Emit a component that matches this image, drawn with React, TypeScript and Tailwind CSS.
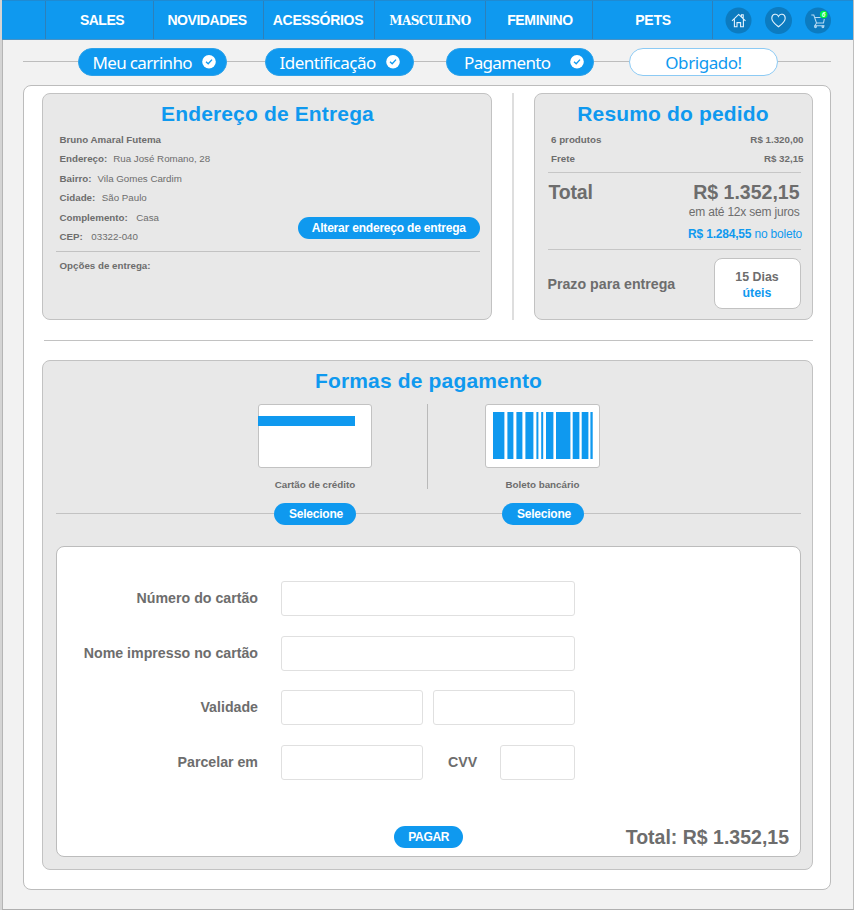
import React from "react";

const BARS: [number, number][] = [
  [0, 11.4], [14.4, 6], [23.4, 6], [32.4, 8], [43.4, 2], [48.2, 2],
  [53, 7.4], [63, 14.4], [79.7, 6.7], [88.7, 6.7], [97.4, 2.3],
];

function NavItem({ className, children }: { className: string; children: React.ReactNode }) {
  return (
    <a className={`flex h-full shrink-0 items-center justify-center border-l border-[#2d80ba] text-[14px] font-bold whitespace-nowrap ${className}`}>
      {children}
    </a>
  );
}

function Step({ label, done, className }: { label: string; done?: boolean; className: string }) {
  return (
    <div className={`flex h-[28px] shrink-0 items-center rounded-full border font-['Noto_Sans','Open_Sans',sans-serif] text-[17px] whitespace-nowrap ${className}`}>
      <span className="pt-[2px]">{label}</span>
      {done && (
        <svg className="ml-auto" width="14" height="14" viewBox="0 0 14 14">
          <circle cx="7" cy="6.8" r="6.8" fill="#fff" />
          <path d="M4 6.8 6.2 8.8 10 4.6" fill="none" stroke="#0f99ef" strokeWidth="1.3" />
        </svg>
      )}
    </div>
  );
}

function Pill({ className, children }: { className: string; children: React.ReactNode }) {
  return (
    <button className={`flex h-[22px] shrink-0 items-center justify-center rounded-full bg-[#0f99ef] text-[12px] font-bold whitespace-nowrap text-white ${className}`}>
      {children}
    </button>
  );
}

function Line({ label, value, gap }: { label: string; value?: string; gap?: string }) {
  return (
    <div className="flex h-[19.4px] items-center whitespace-nowrap">
      <b>{label}</b>
      {value && <span className={gap}>{value}</span>}
    </div>
  );
}

function Label({ children }: { children: React.ReactNode }) {
  return <label className="w-[201px] shrink-0 pt-px text-right text-[14.2px] font-bold whitespace-nowrap">{children}</label>;
}

function Field({ className }: { className: string }) {
  return <div className={`h-[35px] shrink-0 rounded-[3px] border border-[#e0e0e0] bg-white ${className}`} />;
}

function Header() {
  return (
    <header className="flex h-[40px] border-y border-t-[#1f8ad2] border-b-[#4a92c4] bg-[#0f99ef] pl-[43px] text-white">
      <NavItem className="w-[108px] pl-[5px] tracking-[-0.5px]">SALES</NavItem>
      <NavItem className="w-[110px] pr-[3px] tracking-[-0.45px]">NOVIDADES</NavItem>
      <NavItem className="w-[111px] pr-[2px] tracking-[-0.3px]">ACESSÓRIOS</NavItem>
      <NavItem className="w-[111px] pt-px font-['DejaVu_Serif',serif] text-[12px]! tracking-[-0.6px]">MASCULINO</NavItem>
      <NavItem className="w-[107px] pl-[2px] tracking-[-0.35px]">FEMININO</NavItem>
      <NavItem className="w-[120px] pl-px tracking-[-0.3px]">PETS</NavItem>
      <div className="flex h-full flex-1 items-center gap-[13px] border-l border-[#2d80ba] pl-[12px]">
        <svg width="27" height="27" viewBox="0 0 27 27" fill="none" stroke="#e4f3fd" strokeWidth="1.1">
          <circle cx="13.5" cy="13.5" r="13" fill="#0c7bc0" stroke="none" />
          <path d="M7 13.8 13.7 7.4 20.5 13.8M9.4 12.2V19.7H12V15.6H15.6V19.7H18.4V12.2M16.4 9.5V7.8H18.2V11.3" />
        </svg>
        <svg width="27" height="27" viewBox="0 0 27 27" fill="none" stroke="#e4f3fd" strokeWidth="1.1">
          <circle cx="13.5" cy="13.5" r="13.5" fill="#0c7bc0" stroke="none" />
          <path d="M13.5 19.8C10.6 17.5 6.8 14.8 6.8 11.2C6.8 6.9 12 5.8 13.5 9.4C15 5.8 20.2 6.9 20.2 11.2C20.2 14.8 16.4 17.5 13.5 19.8Z" />
        </svg>
        <svg width="27" height="27" viewBox="0 0 27 27" fill="none" stroke="#b9dcf3" strokeWidth="1.05">
          <circle cx="13" cy="13.5" r="13" fill="#0c7bc0" stroke="none" />
          <path d="M6.3 8H8.8L11.5 16H18.5L19.3 12M9.7 10.4H15.5M11.4 16.2 9.8 18.7H19.5" />
          <circle cx="10.5" cy="19.8" r="0.9" />
          <circle cx="17.9" cy="19.8" r="0.9" />
          <circle cx="18.7" cy="7.5" r="3.8" fill="#00f53c" stroke="none" />
          <text x="18.5" y="9.8" textAnchor="middle" fontSize="6.5" fontWeight="bold" fontStyle="italic" fill="#fff" stroke="none">6</text>
        </svg>
      </div>
    </header>
  );
}

function Steps() {
  return (
    <div className="flex h-[45px] items-start pt-[8px] pl-[21px]">
      <div className="flex items-center">
        <i className="mb-px h-px w-[55px] bg-[#bdbdbd]" />
        <Step label="Meu carrinho" done className="w-[149px] border-[#2ca2ea] bg-[#0f99ef] pr-[10px] pl-[13.5px] tracking-[-0.66px] text-white" />
        <i className="mb-px h-px w-[38px] bg-[#bdbdbd]" />
        <Step label="Identificação" done className="w-[149px] border-[#2ca2ea] bg-[#0f99ef] pr-[13px] pl-[13.5px] tracking-[-0.5px] text-white" />
        <i className="mb-px h-px w-[32px] bg-[#bdbdbd]" />
        <Step label="Pagamento" done className="w-[148px] border-[#2ca2ea] bg-[#0f99ef] pr-[9px] pl-[17px] tracking-[-0.65px] text-white" />
        <i className="mb-px h-px w-[35px] bg-[#bdbdbd]" />
        <Step label="Obrigado!" className="w-[149px] justify-center border-[#8ccaf4] bg-white tracking-[-0.45px] text-[#0f99ef]" />
        <i className="mb-px h-px w-[53px] bg-[#bdbdbd]" />
      </div>
    </div>
  );
}

function Address() {
  return (
    <section className="h-[227px] w-[450px] shrink-0 rounded-[8px] border border-[#c2c2c2] bg-[#e8e8e8] pt-[7px] pr-[11px] pl-[13px] text-[9.75px]">
      <h2 className="pr-px text-center text-[21px] leading-[26px] font-bold tracking-[0.15px] text-[#0f99ef]">Endereço de Entrega</h2>
      <div className="mt-[4px] flex h-[121px] items-start justify-between border-b border-[#c2c2c2] pl-[3.5px]">
        <div className="-mt-[0.4px]">
          <Line label="Bruno Amaral Futema" />
          <Line label="Endereço:" value="Rua José Romano, 28" gap="ml-[6px]" />
          <Line label="Bairro:" value="Vila Gomes Cardim" gap="ml-[6px]" />
          <Line label="Cidade:" value="São Paulo" gap="ml-[6.5px]" />
          <Line label="Complemento:" value="Casa" gap="ml-[8.5px]" />
          <Line label="CEP:" value="03322-040" gap="ml-[8.5px]" />
        </div>
        <Pill className="mt-[86px] w-[182.5px] tracking-[-0.2px]">Alterar endereço de entrega</Pill>
      </div>
      <div className="mt-[5px] pl-[3.5px]">
        <Line label="Opções de entrega:" />
      </div>
    </section>
  );
}

function Summary() {
  return (
    <section className="h-[227px] w-[279px] shrink-0 rounded-[8px] border border-[#c2c2c2] bg-[#e8e8e8] pt-[7px] pl-[13px]">
      <h2 className="w-[250px] text-center text-[21px] leading-[26px] font-bold tracking-[0.15px] text-[#0f99ef]">Resumo do pedido</h2>
      <div className="mt-[4px] w-[255.5px] pl-[3px] text-[9.75px] font-bold">
        <div className="flex h-[19px] items-center justify-between"><span>6 produtos</span><span>R$ 1.320,00</span></div>
        <div className="flex h-[19px] items-center justify-between"><span>Frete</span><span>R$ 32,15</span></div>
      </div>
      <div className="mt-[3px] flex h-[78px] w-[253px] justify-between border-y border-[#c6c6c6] pl-[0.5px]">
        <b className="pt-[7px] text-[19.5px] leading-[24px] tracking-[-0.2px]">Total</b>
        <div className="pt-[7px] text-right text-[12px] tracking-[-0.2px] whitespace-nowrap">
          <b className="block pr-[1.5px] text-[19.5px] leading-[24px] tracking-normal">R$ 1.352,15</b>
          <p className="pt-px pr-[1.5px] leading-[15px]">em até 12x sem juros</p>
          <p className="-mr-px pt-[6px] leading-[16px] text-[#0f99ef]"><b>R$ 1.284,55</b> no boleto</p>
        </div>
      </div>
      <div className="flex h-[68px] w-[252.5px] items-center justify-between font-bold">
        <span className="-ml-[0.5px] pt-px text-[14.2px]">Prazo para entrega</span>
        <div className="mb-px flex h-[51px] w-[87px] flex-col items-center rounded-[8px] border border-[#c2c2c2] bg-white pt-[10px] text-[12.4px] leading-[16px]">
          <span>15 Dias</span>
          <span className="text-[#0f99ef]">úteis</span>
        </div>
      </div>
    </section>
  );
}

function Payment() {
  return (
    <section className="h-[510px] rounded-[8px] border border-[#c2c2c2] bg-[#e8e8e8] pt-[7px] pr-[11px] pl-[13px]">
      <h2 className="text-center text-[21px] leading-[26px] font-bold tracking-[0.16px] text-[#0f99ef]">Formas de pagamento</h2>
      <div className="mt-[10px] flex h-[87px] pl-[202px] text-center text-[9.8px] font-bold">
        <div className="w-[114px]">
          <div className="h-[64px] rounded-[3px] border border-[#c2c2c2] bg-white pt-[11px]">
            <div className="-ml-px h-[10px] w-[97px] bg-[#0f99ef]" />
          </div>
          <p className="pt-[10px] leading-[14px]">Cartão de crédito</p>
        </div>
        <i className="ml-[55px] h-[85px] w-px bg-[#b9b9b9]" />
        <div className="ml-[57px] w-[115px]">
          <div className="flex h-[64px] justify-center rounded-[3px] border border-[#c2c2c2] bg-white pt-[7px]">
            <svg width="100" height="47" viewBox="0 0 100 47" fill="#0f99ef">
              {BARS.map(([x, w]) => <rect key={x} x={x} y="0" width={w} height="47" />)}
            </svg>
          </div>
          <p className="pt-[10px] leading-[14px]">Boleto bancário</p>
        </div>
      </div>
      <div className="mt-[11px] flex h-[23px] items-center">
        <i className="h-px w-[218px] bg-[#c2c2c2]" />
        <Pill className="w-[82px] pl-[2px] tracking-[-0.22px]">Selecione</Pill>
        <i className="h-px w-[146px] bg-[#c2c2c2]" />
        <Pill className="w-[82px] pl-[2px] tracking-[-0.22px]">Selecione</Pill>
        <i className="h-px flex-1 bg-[#c2c2c2]" />
      </div>
      <form className="mt-[21px] h-[311px] rounded-[8px] border border-[#bcbcbc] bg-white pt-[34px]">
        <div className="flex flex-col gap-[19.5px]">
          <div className="flex items-center gap-[23px]">
            <Label>Número do cartão</Label>
            <Field className="w-[294px]" />
          </div>
          <div className="flex items-center gap-[23px]">
            <Label>Nome impresso no cartão</Label>
            <Field className="w-[294px]" />
          </div>
          <div className="flex items-center">
            <Label>Validade</Label>
            <Field className="ml-[23px] w-[142px]" />
            <Field className="ml-[10px] w-[142px]" />
          </div>
          <div className="flex items-center">
            <Label>Parcelar em</Label>
            <Field className="ml-[23px] w-[142px]" />
            <b className="w-[77px] pt-px pl-[25px] text-[14.2px]">CVV</b>
            <Field className="w-[75px]" />
          </div>
        </div>
        <div className="mt-[43px] flex items-center justify-between pr-[11px] pl-[337px]">
          <Pill className="w-[68.5px] pl-[1px] tracking-[-0.3px]">PAGAR</Pill>
          <b className="text-[19.5px]">Total: R$ 1.352,15</b>
        </div>
      </form>
    </section>
  );
}

export default function App() {
  return (
    <div className="h-[910px] w-[854px] overflow-hidden border-l-2 border-[#d4d4d4] bg-[#f2f2f2] font-['Liberation_Sans',Arial,sans-serif] text-[#6d6d6d]">
      <div className="flex h-full flex-col border-r border-b border-r-[#bdbdbd] border-b-[#b0b0b0]">
        <Header />
        <div className="flex-1 border-l border-[#b5b5b5]">
          <div className="-ml-px">
            <Steps />
            <main className="ml-[21px] h-[804.5px] w-[808px] rounded-[8px] border border-[#bcbcbc] bg-white pt-[7px] pl-[18px]">
              <div className="flex">
                <Address />
                <i className="ml-[20px] h-[227px] w-[2px] bg-[#dedede]" />
                <div className="ml-[20px]"><Summary /></div>
              </div>
              <hr className="mt-[20px] ml-[2px] w-[769px] border-[#c2c2c2]" />
              <div className="mt-[19px] w-[771px]"><Payment /></div>
            </main>
          </div>
        </div>
      </div>
    </div>
  );
}
